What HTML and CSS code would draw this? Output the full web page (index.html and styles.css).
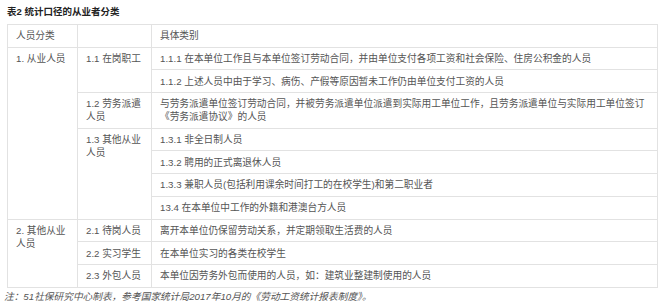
FILE: index.html
```html
<!DOCTYPE html>
<html lang="zh">
<head>
<meta charset="utf-8">
<link rel="stylesheet" href="styles.css">
</head>
<body>
<div class="page">
  <div class="title">表2 统计口径的从业者分类</div>
  <table class="tbl">
    <colgroup><col class="c1"><col class="c2"><col class="c3"></colgroup>
    <tr><td>人员分类</td><td></td><td>具体类别</td></tr>
    <tr><td rowspan="7">1. 从业人员</td><td rowspan="2">1.1 在岗职工</td><td>1.1.1 在本单位工作且与本单位签订劳动合同，并由单位支付各项工资和社会保险、住房公积金的人员</td></tr>
    <tr><td>1.1.2 上述人员中由于学习、病伤、产假等原因暂未工作仍由单位支付工资的人员</td></tr>
    <tr><td>1.2 劳务派遣<br>人员</td><td>与劳务派遣单位签订劳动合同，并被劳务派遣单位派遣到实际用工单位工作，且劳务派遣单位与实际用工单位签订<br>《劳务派遣协议》的人员</td></tr>
    <tr><td rowspan="4">1.3 其他从业<br>人员</td><td>1.3.1 非全日制人员</td></tr>
    <tr><td>1.3.2 聘用的正式离退休人员</td></tr>
    <tr><td>1.3.3 兼职人员(包括利用课余时间打工的在校学生)和第二职业者</td></tr>
    <tr><td>13.4 在本单位中工作的外籍和港澳台方人员</td></tr>
    <tr><td rowspan="3">2. 其他从业<br>人员</td><td>2.1 待岗人员</td><td>离开本单位仍保留劳动关系，并定期领取生活费的人员</td></tr>
    <tr><td>2.2 实习学生</td><td>在本单位实习的各类在校学生</td></tr>
    <tr><td>2.3 外包人员</td><td>本单位因劳务外包而使用的人员，如：建筑业整建制使用的人员</td></tr>
  </table>
  <div class="note">注：51社保研究中心制表，参考国家统计局2017年10月的《劳动工资统计报表制度》。</div>
</div>
</body>
</html>
```

FILE: styles.css
```css
html, body {
  margin: 0;
  padding: 0;
  background: #ffffff;
}
body {
  font-family: "Liberation Sans", "Noto Sans CJK SC", sans-serif;
  color: #555555;
  font-size: 9.7px;
}
.page {
  padding: 5px 8px 0 7px;
}
.title {
  font-weight: bold;
  color: #222222;
  font-size: 9.5px;
  line-height: 14px;
  height: 19px;
}
.tbl {
  border-collapse: collapse;
  width: 650px;
  table-layout: fixed;
}
.c1 { width: 70px; }
.c2 { width: 74px; }
.c3 { width: 506px; }
.tbl td {
  border: 1px solid #e2e2e2;
  padding: 4.35px 8px;
  line-height: 13px;
  vertical-align: top;
  white-space: nowrap;
}
.tbl td:nth-last-child(1) {
  padding-left: 8px;
}
.note {
  font-style: italic;
  color: #555555;
  font-size: 9.7px;
  line-height: 14px;
  margin-left: -3px;
  padding-top: 2px;
}
```
